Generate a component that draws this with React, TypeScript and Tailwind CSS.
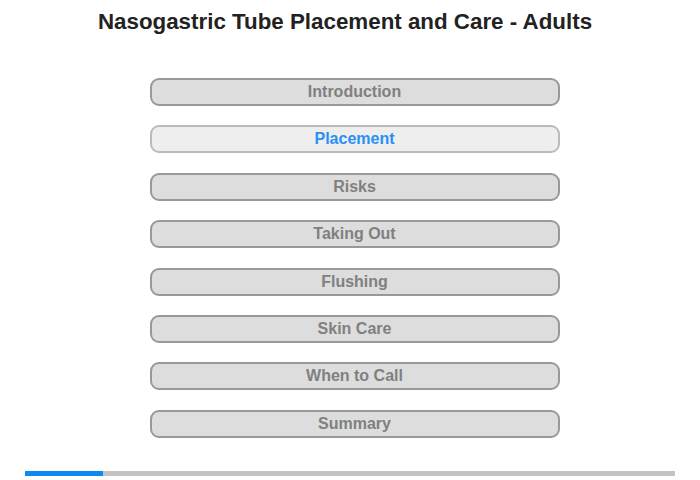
const sections = [
  "Introduction",
  "Placement",
  "Risks",
  "Taking Out",
  "Flushing",
  "Skin Care",
  "When to Call",
  "Summary",
];

const ACTIVE = 1;

export default function App() {
  return (
    <div className="flex h-[480px] w-[700px] flex-col bg-white font-['Liberation_Sans',Arial,sans-serif]">
      <h1 className="mt-[9px] pr-[10px] text-center text-[22.35px] font-bold leading-[26px] text-[#222]">
        Nasogastric Tube Placement and Care - Adults
      </h1>

      <nav className="mt-[43px] flex flex-col items-center gap-[19.4px] pl-[9px]">
        {sections.map((s, i) => {
          const active = i === ACTIVE;
          return (
            <button
              key={s}
              type="button"
              className={
                active
                  ? "h-[28px] w-[410px] rounded-[9px] border-2 border-[#bbb] bg-[#eee] text-[16px] font-bold leading-none text-[#2a8ff7]"
                  : "h-[28px] w-[410px] rounded-[9px] border-2 border-[#999] bg-[#ddd] text-[16px] font-bold leading-none text-[#808080]"
              }
            >
              {s}
            </button>
          );
        })}
      </nav>

      {/* progress */}
      <div className="mx-[25px] mt-auto mb-[4px] flex h-[5px] bg-[#c3c3c3]">
        <div className="h-full w-[78px] bg-[#0a88f4]" />
      </div>
    </div>
  );
}
